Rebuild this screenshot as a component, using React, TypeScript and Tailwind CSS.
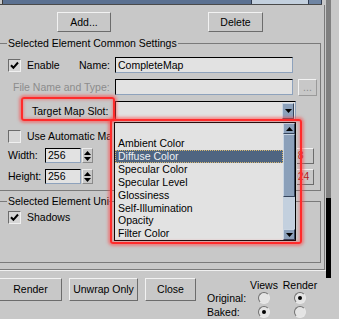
import React from "react";

const FONT = "font-['Liberation_Sans',Arial,sans-serif]";

function Btn({ children, className = "" }: { children?: React.ReactNode; className?: string }) {
  return (
    <div
      className={`flex items-center justify-center border border-t-[#f2f2f2] border-l-[#f2f2f2] border-r-[#6c6c6c] border-b-[#6c6c6c] bg-[#c8c8c8] ${className}`}
    >
      {children}
    </div>
  );
}

function Check({ checked }: { checked?: boolean }) {
  return (
    <div className="w-[13px] h-[13px] shrink-0 border border-t-[#6c6c6c] border-l-[#6c6c6c] border-r-[#f0f0f0] border-b-[#f0f0f0] bg-[#d6d6d6] flex items-center justify-center">
      {checked && (
        <svg width="9" height="9" viewBox="0 0 9 9">
          <path d="M1 4.2 L3.4 6.8 L8 1.5" stroke="black" strokeWidth="2" fill="none" />
        </svg>
      )}
    </div>
  );
}

function Field({ className = "", children }: { className?: string; children?: React.ReactNode }) {
  return (
    <div
      className={`bg-[#e2e2e2] border border-t-black border-l-black border-r-[#8ea2bc] border-b-[#8ea2bc] flex items-center pl-[2px] ${className}`}
    >
      {children}
    </div>
  );
}

function Spinner() {
  return (
    <div className="w-[11px] h-[15px] ml-[1px] flex flex-col items-center justify-center gap-[2px] bg-[#c8c8c8] border border-t-[#ececec] border-l-[#ececec] border-r-[#8a8a8a] border-b-[#8a8a8a]">
      <svg width="7" height="4" viewBox="0 0 7 4">
        <path d="M0 4 L3.5 0 L7 4 Z" fill="black" />
      </svg>
      <svg width="7" height="4" viewBox="0 0 7 4">
        <path d="M0 0 L3.5 4 L7 0 Z" fill="black" />
      </svg>
    </div>
  );
}

function GroupHeader({ title, clip }: { title: string; clip?: string }) {
  return (
    <div className="h-[13px] flex items-center">
      <div className="w-[7px] h-px bg-[#7a7a7a] shrink-0" />
      <span className={`px-[1px] whitespace-nowrap overflow-hidden shrink-0 ${clip ?? ""}`}>{title}</span>
      <div className="flex-1 h-px bg-[#7a7a7a]" />
      <div className="w-px h-[7px] self-end bg-[#7a7a7a]" />
    </div>
  );
}

function Radio({ on }: { on?: boolean }) {
  return (
    <div className="w-[12px] h-[12px] rounded-full border border-t-[#707070] border-l-[#707070] border-r-[#e8e8e8] border-b-[#e8e8e8] bg-[#e4e4e4] flex items-center justify-center">
      {on && <div className="w-[4px] h-[4px] rounded-full bg-black" />}
    </div>
  );
}

const ITEMS = [
  "",
  "Ambient Color",
  "Diffuse Color",
  "Specular Color",
  "Specular Level",
  "Glossiness",
  "Self-Illumination",
  "Opacity",
  "Filter Color",
];

const BLUEBTN =
  "bg-[#8ba0ba] border border-t-[#c8d4e2] border-l-[#c8d4e2] border-r-[#34435a] border-b-[#34435a]";

export default function App() {
  return (
    <div
      className={`relative w-[339px] h-[319px] overflow-hidden bg-[#c8c8c8] text-[10.5px] leading-none text-black ${FONT}`}
    >
      <div className="flex">
        {/* main column */}
        <div className="w-[325px] flex flex-col">
          {/* horizontal scrollbar remnant at the top */}
          <div className="h-[5px] w-[322px] flex border-b border-[#4a4a4a]">
            <div className="w-[3px] border-r border-[#3a3a3a]" />
            <div className="w-[249px] bg-[#5b7191] border-r border-[#2e3a50]" />
            <div className="flex-1 bg-[#c3d0de]" />
            <div className="w-[14px] bg-[#6f85a3] border-l border-r border-[#2e3a50]" />
          </div>

          {/* panel */}
          <div className="flex flex-col border-r border-b border-[#7a7a7a] w-[325px] pb-[6px]">
            {/* Add / Delete */}
            <div className="flex mt-[7px]">
              <Btn className="ml-[57px] w-[54px] h-[20px]">Add...</Btn>
              <Btn className="ml-[97px] w-[55px] h-[20px]">Delete</Btn>
            </div>

            {/* Group 1 */}
            <div className="mt-[5px] w-[321px]">
              <GroupHeader title="Selected Element Common Settings" />
              <div className="border-r border-b border-[#7a7a7a] pb-[6px] flex flex-col">
                {/* Enable / Name */}
                <div className="flex items-center mt-[7px] h-[16px]">
                  <div className="ml-[8px]">
                    <Check checked />
                  </div>
                  <span className="ml-[6px] w-[52px]">Enable</span>
                  <span className="w-[36px]">Name:</span>
                  <Field className="w-[178px] h-[16px]">CompleteMap</Field>
                </div>
                {/* File name */}
                <div className="flex items-center mt-[6px] h-[16px]">
                  <span className="ml-[13px] text-[#8c8c8c] w-[102px] whitespace-nowrap">File Name and Type:</span>
                  <Field className="w-[178px] h-[16px]" />
                  <Btn className="ml-[5px] w-[19px] h-[17px] text-[#8c8c8c] !border-r-[#9a9a9a] !border-b-[#9a9a9a]">
                    ...
                  </Btn>
                </div>
                {/* Target map slot */}
                <div className="flex items-center mt-[6px] h-[20px]">
                  <span className="ml-[32px] w-[83px] whitespace-nowrap">Target Map Slot:</span>
                  <Field className="w-[181px] h-[20px] !pl-0 justify-end">
                    <div className={`w-[12px] h-[16px] mr-[1px] flex items-center justify-center ${BLUEBTN}`}>
                      <svg width="7" height="4" viewBox="0 0 7 4">
                        <path d="M0 0 L3.5 4 L7 0 Z" fill="black" />
                      </svg>
                    </div>
                  </Field>
                </div>
                {/* Use automatic (its right part is covered by the open list) */}
                <div className="flex items-center mt-[9px] h-[13px]">
                  <div className="ml-[8px]">
                    <Check />
                  </div>
                  <span className="ml-[6px] w-[83px] overflow-hidden whitespace-nowrap">Use Automatic Map Size</span>
                </div>
                {/* Width */}
                <div className="flex items-center mt-[5px] h-[15px]">
                  <span className="ml-[8px] w-[37px]">Width:</span>
                  <Field className="w-[36px] h-[15px]">256</Field>
                  <Spinner />
                  <div className="ml-[204px] w-[17px] h-[16px] overflow-hidden flex justify-end">
                    <Btn className="shrink-0 w-[32px] h-[16px] justify-start pl-[3px] text-[#b02020]">128</Btn>
                  </div>
                </div>
                {/* Height */}
                <div className="flex items-center mt-[6px] h-[15px]">
                  <span className="ml-[8px] w-[37px]">Height:</span>
                  <Field className="w-[36px] h-[15px]">256</Field>
                  <Spinner />
                  <div className="ml-[204px] w-[17px] h-[16px] overflow-hidden flex justify-end">
                    <Btn className="shrink-0 w-[32px] h-[16px] justify-start pl-[3px] text-[#b02020]">1024</Btn>
                  </div>
                </div>
              </div>
            </div>

            {/* Group 2 */}
            <div className="mt-[4px] w-[321px]">
              <GroupHeader title="Selected Element Unique Settings" clip="w-[102px]" />
              <div className="border-r border-b border-[#7a7a7a] h-[55px] flex flex-col">
                <div className="flex items-center mt-[3px] h-[13px]">
                  <div className="ml-[8px]">
                    <Check checked />
                  </div>
                  <span className="ml-[6px]">Shadows</span>
                </div>
              </div>
            </div>
          </div>
          <div className="h-px bg-[#f0f0f0] w-[326px]" />

          {/* bottom area */}
          <div className="flex mt-[7px]">
            <Btn className="w-[62px] h-[23px] !border-l-0">Render</Btn>
            <Btn className="ml-[7px] w-[69px] h-[23px]">Unwrap Only</Btn>
            <Btn className="ml-[7px] w-[51px] h-[23px]">Close</Btn>
          </div>
        </div>

        {/* right scroll column */}
        <div className="ml-[1px] w-[5px] h-[278px] flex flex-col">
          <div className="h-[198px] bg-[#808080]" />
          <div className="flex-1 bg-black" />
        </div>
      </div>

      {/* Views / Render radios (bottom right) */}
      <div className="absolute left-[207px] top-[279px] grid grid-cols-[40px_34px_38px] grid-rows-[12px_14px_14px] items-center">
        <div />
        <div className="justify-self-center">Views</div>
        <div className="justify-self-center">Render</div>
        <div>Original:</div>
        <div className="justify-self-center">
          <Radio />
        </div>
        <div className="justify-self-center">
          <Radio on />
        </div>
        <div>Baked:</div>
        <div className="justify-self-center">
          <Radio on />
        </div>
        <div className="justify-self-center">
          <Radio />
        </div>
      </div>

      {/* red highlight around label */}
      <div className="absolute left-[21px] top-[97px] w-[94px] h-[24px] rounded-[3px] border-2 border-[#ff2b2b] shadow-[0_0_3px_2px_rgba(255,70,70,0.55),inset_0_0_3px_1px_rgba(255,70,70,0.45)]" />

      {/* open dropdown list */}
      <div className="absolute left-[114px] top-[122px] w-[182px] h-[119px] bg-[#e2e2e2] border border-black flex">
        <div className="flex-1 flex flex-col pt-[1px]">
          {ITEMS.map((it, i) =>
            i === 2 ? (
              <div
                key={i}
                className="h-[13px] flex items-center pl-[2px] bg-[#4f6581] text-[#eef0f4] border border-dotted border-[#d8b870] whitespace-nowrap"
              >
                {it}
              </div>
            ) : (
              <div key={i} className="h-[13px] flex items-center pl-[3px] whitespace-nowrap">
                {it}
              </div>
            )
          )}
        </div>
        <div className="w-[12px] flex flex-col bg-[#c3d0de]">
          <div className={`h-[11px] flex items-center justify-center ${BLUEBTN}`}>
            <svg width="7" height="4" viewBox="0 0 7 4">
              <path d="M0 4 L3.5 0 L7 4 Z" fill="black" />
            </svg>
          </div>
          <div className={`h-[63px] ${BLUEBTN}`} />
          <div className="flex-1" />
          <div className={`h-[11px] flex items-center justify-center ${BLUEBTN}`}>
            <svg width="7" height="4" viewBox="0 0 7 4">
              <path d="M0 0 L3.5 4 L7 0 Z" fill="black" />
            </svg>
          </div>
        </div>
      </div>

      {/* red highlight around list */}
      <div className="absolute left-[110px] top-[119px] w-[192px] h-[125px] rounded-[3px] border-2 border-[#ff2b2b] shadow-[0_0_3px_2px_rgba(255,70,70,0.55),inset_0_0_3px_1px_rgba(255,70,70,0.45)]" />
    </div>
  );
}
